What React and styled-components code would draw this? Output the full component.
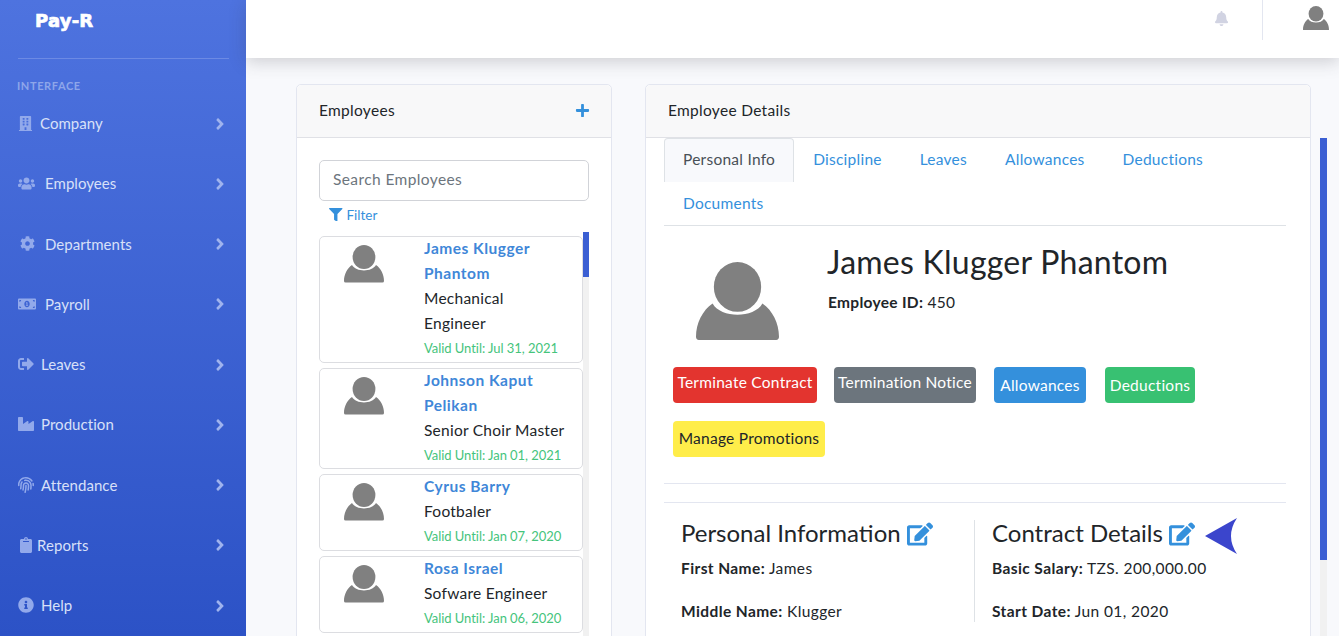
import React from "react";
import styled, { createGlobalStyle } from "styled-components";
import {
  FaBuilding, FaUsers, FaCog, FaMoneyBillAlt, FaSignOutAlt, FaIndustry,
  FaFingerprint, FaClipboard, FaInfoCircle, FaAngleRight, FaBell, FaPlus,
  FaFilter, FaEdit,
} from "react-icons/fa";

const GlobalStyle = createGlobalStyle`
  html, body { margin: 0; padding: 0; height: 636px; overflow: hidden; background: #fff; }
  body { font-family: Lato, "Open Sans", sans-serif; font-size: 16px; color: #212529; }
  * { box-sizing: border-box; }
`;

const Page = styled.div`
  display: flex;
  width: 1339px;
  height: 636px;
  overflow: hidden;
`;

const Sidebar = styled.aside`
  width: 246px;
  flex: none;
  height: 636px;
  padding: 0 17px 0 18px;
  background: linear-gradient(180deg, #4e73df 0%, #2c52c6 100%);
  color: #d4dcf6;
`;

const Brand = styled.div`
  height: 59px;
  padding: 9px 0 0 17px;
  border-bottom: 1px solid #6c8ae4;
  color: #fff;
  font-family: "DejaVu Sans", sans-serif;
  font-weight: 700;
  font-size: 18px;
  line-height: 24px;
  letter-spacing: 0.2px;
  -webkit-text-stroke: 0.7px #fff;
`;

const SectionLabel = styled.div`
  margin: 20px 0 0 -1px;
  height: 14px;
  font-size: 11px;
  line-height: 14px;
  font-weight: 700;
  letter-spacing: 0.6px;
  color: #8ea6ea;
`;

const NavItem = styled.div`
  display: flex;
  align-items: center;
  height: 60.25px;
  font-size: 15px;
  letter-spacing: 0.05px;
  color: #d8e0f8;
`;

const NavIcon = styled.span`
  display: flex;
  width: ${(p) => p.$w}px;
  padding-left: ${(p) => p.$pl || 0}px;
  color: #92a9eb;
  font-size: ${(p) => p.$size || 15}px;
`;

const NavText = styled.span`
  flex: 1;
`;

const Chevron = styled(FaAngleRight)`
  color: #9fb3ee;
  font-size: 18px;
  margin-top: 1px;
`;

const Main = styled.div`
  flex: 1;
  min-width: 0;
  background: #f8f9fc;
`;

const Topbar = styled.header`
  height: 58px;
  display: flex;
  align-items: flex-start;
  justify-content: flex-end;
  background: #fff;
  box-shadow: 0 4px 16px rgba(58, 59, 69, 0.22);
`;

const BellWrap = styled.div`
  padding-top: 11px;
  margin-right: 33px;
  color: #d1d3e2;
  font-size: 15px;
  line-height: 15px;
`;

const TopDivider = styled.div`
  width: 1px;
  height: 40px;
  background: #e3e6f0;
  margin-right: 40px;
`;

const TopAvatar = styled.div`
  padding-top: 6px;
  margin-right: 10px;
  line-height: 0;
`;

const Content = styled.div`
  display: flex;
  align-items: flex-start;
  padding: 26px 0 0 50px;
`;

const Card = styled.section`
  flex: none;
  width: ${(p) => p.$w}px;
  margin-right: ${(p) => p.$mr}px;
  height: 560px;
  background: #fff;
  border: 1px solid #e3e6f0;
  border-radius: 5px;
`;

const CardHeader = styled.div`
  display: flex;
  align-items: center;
  justify-content: space-between;
  height: 53px;
  padding: 0 22px 2px;
  background: #f8f8f9;
  border-bottom: 1px solid #e0e1e6;
  border-radius: 5px 5px 0 0;
  font-size: 15.5px;
  letter-spacing: 0.3px;
  color: #212529;
`;

const AddIcon = styled(FaPlus)`
  color: #3490dc;
  font-size: 15px;
  margin-right: -1px;
`;

const EmployeesBody = styled.div`
  padding: 22px 22px 0;
`;

const Search = styled.input`
  display: block;
  width: 270px;
  height: 41px;
  padding: 0 13px 3px;
  border: 1px solid #d1d3d8;
  border-radius: 5px;
  font: 15.5px Lato, sans-serif;
  letter-spacing: 0.4px;
  &::placeholder { color: #6c757d; opacity: 1; }
`;

const FilterLink = styled.div`
  display: flex;
  align-items: center;
  gap: 4px;
  height: 31px;
  padding: 0 0 4px 10px;
  color: #3490dc;
  font-size: 13.5px;
`;

const ListArea = styled.div`
  display: flex;
  height: 404px;
  overflow: hidden;
`;

const EmployeeList = styled.div`
  width: 264px;
  flex: none;
  padding-top: 4px;
  display: flex;
  flex-direction: column;
  gap: 5px;
`;

const EmployeeRow = styled.article`
  display: flex;
  flex: none;
  border: 1px solid #dcdde1;
  border-radius: 5px;
  padding: 0 0 0 24px;
  height: ${(p) => p.$h}px;
`;

const RowAvatar = styled.div`
  width: 80px;
  flex: none;
  padding-top: 8px;
  line-height: 0;
`;

const RowText = styled.div`
  margin-top: -1px;
  font-size: 15.5px;
  line-height: 25px;
`;

const EmpName = styled.div`
  color: #3f87d8;
  font-weight: 700;
  letter-spacing: 0.5px;
`;

const EmpRole = styled.div`
  color: #212529;
  letter-spacing: 0.25px;
`;

const Valid = styled.div`
  color: #45c47c;
  font-size: 13px;
  letter-spacing: -0.05px;
`;

const Rail = styled.div`
  flex: none;
  width: ${(p) => p.$w}px;
  background: #f1f1f1;
`;

const Thumb = styled.div`
  height: ${(p) => p.$h}px;
  background: #3b5fd3;
`;

const PageRail = styled(Rail)`
  height: 498px;
  margin-top: 54px;
`;

const DetailsBody = styled.div`
  padding: 0 24px 0 18px;
`;

const Tabs = styled.div`
  display: flex;
  flex-wrap: wrap;
  border-bottom: 1px solid #dee2e6;
`;

const Tab = styled.div`
  height: 43.5px;
  padding: 0 18px 2px;
  display: flex;
  align-items: center;
  font-size: 15.5px;
  letter-spacing: 0.25px;
  color: ${(p) => (p.$active ? "#495057" : "#3490dc")};
  background: ${(p) => (p.$active ? "#f8f9fc" : "transparent")};
  border: 1px solid ${(p) => (p.$active ? "#dee2e6" : "transparent")};
  border-bottom: 0;
  border-radius: 4px 4px 0 0;
`;

const TabBreak = styled.div`
  flex-basis: 100%;
  height: 0;
`;

const Profile = styled.div`
  display: flex;
  padding: 16px 0 0 32px;
  height: 141px;
`;

const ProfileAvatar = styled.div`
  width: 131px;
  flex: none;
  padding-top: 20px;
  line-height: 0;
`;

const ProfileName = styled.h1`
  margin: 0;
  font-size: 32px;
  line-height: 40px;
  font-weight: 400;
  letter-spacing: 0.25px;
  color: #212529;
`;

const ProfileId = styled.div`
  margin-top: 9px;
  font-size: 15.5px;
  line-height: 22px;
  letter-spacing: 0.3px;
  padding-left: 1px;
`;

const Strong = styled.b`
  font-weight: 700;
`;

const Actions = styled.div`
  display: flex;
  flex-wrap: wrap;
  gap: 18px 17px;
  padding-left: 9px;
  padding-bottom: 26px;
  border-bottom: 1px solid #e3e6f0;
`;

const Action = styled.div`
  height: 36px;
  width: ${(p) => p.$w}px;
  margin-left: ${(p) => p.$ml || 0}px;
  display: flex;
  justify-content: center;
  align-items: center;
  padding-bottom: ${(p) => p.$pb}px;
  border-radius: 4px;
  font-size: 15.5px;
  letter-spacing: 0.25px;
  color: ${(p) => p.$fg || "#fff"};
  background: ${(p) => p.$bg};
`;

const InfoColumns = styled.div`
  display: flex;
  margin-top: 18px;
  border-top: 1px solid #e3e6f0;
  padding-top: 17px;
`;

const InfoCol = styled.div`
  width: ${(p) => p.$w}px;
  padding-left: ${(p) => p.$pl}px;
  border-left: ${(p) => (p.$divider ? "1px solid #dee2e6" : "0")};
`;

const InfoTitle = styled.h2`
  display: flex;
  align-items: center;
  gap: 6px;
  margin: 0;
  height: 24px;
  font-size: 24px;
  font-weight: 400;
  color: #212529;
`;

const EditIcon = styled(FaEdit)`
  color: #3490dc;
  font-size: 26px;
  margin-top: 3px;
`;

const Pointer = styled.svg`
  margin: 7px 0 0 4px;
`;

const InfoLine = styled.div`
  margin-top: ${(p) => p.$mt}px;
  font-size: 15.5px;
  line-height: 22px;
  letter-spacing: 0.4px;
`;

const Person = ({ size, color = "#808080" }) => (
  <svg width={size} height={size * 0.94} viewBox="0 0 100 94" fill={color}>
    <ellipse cx="50" cy="30" rx="28.5" ry="30" />
    <path d="M20 50 C30 68 70 68 80 50 C92 58 100 74 100 90 Q100 94 96 94 L4 94 Q0 94 0 90 C0 74 8 58 20 50 Z" />
  </svg>
);

const navItems = [
  { label: "Company", Icon: FaBuilding, w: 22, size: 15 },
  { label: "Employees", Icon: FaUsers, w: 27, size: 17 },
  { label: "Departments", Icon: FaCog, w: 27, size: 15, pl: 2 },
  { label: "Payroll", Icon: FaMoneyBillAlt, w: 27, size: 18 },
  { label: "Leaves", Icon: FaSignOutAlt, w: 23, size: 16 },
  { label: "Production", Icon: FaIndustry, w: 23, size: 16 },
  { label: "Attendance", Icon: FaFingerprint, w: 23, size: 16 },
  { label: "Reports", Icon: FaClipboard, w: 19, size: 16 },
  { label: "Help", Icon: FaInfoCircle, w: 23, size: 16 },
];

const employees = [
  { h: 127, name: ["James Klugger", "Phantom"], role: ["Mechanical", "Engineer"], valid: "Jul 31, 2021" },
  { h: 101, name: ["Johnson Kaput", "Pelikan"], role: ["Senior Choir Master"], valid: "Jan 01, 2021" },
  { h: 77, name: ["Cyrus Barry"], role: ["Footbaler"], valid: "Jan 07, 2020" },
  { h: 77, name: ["Rosa Israel"], role: ["Sofware Engineer"], valid: "Jan 06, 2020" },
];

const tabs = ["Discipline", "Leaves", "Allowances", "Deductions"];

const actions = [
  { label: "Terminate Contract", bg: "#e3342f", w: 144, pb: 7 },
  { label: "Termination Notice", bg: "#6c757d", w: 142, pb: 7 },
  { label: "Allowances", bg: "#3490dc", w: 92, pb: 1, ml: 1 },
  { label: "Deductions", bg: "#38c172", w: 90, pb: 1, ml: 2 },
  { label: "Manage Promotions", bg: "#ffed4a", fg: "#212529", w: 152, pb: 2 },
];

const App = () => (
  <Page>
    <GlobalStyle />
    <Sidebar>
      <Brand>Pay-R</Brand>
      <SectionLabel>INTERFACE</SectionLabel>
      <nav>
        {navItems.map(({ label, Icon, w, size, pl }) => (
          <NavItem key={label}>
            <NavIcon $w={w} $size={size} $pl={pl}><Icon /></NavIcon>
            <NavText>{label}</NavText>
            <Chevron />
          </NavItem>
        ))}
      </nav>
    </Sidebar>
    <Main>
      <Topbar>
        <BellWrap><FaBell /></BellWrap>
        <TopDivider />
        <TopAvatar><Person size={26} /></TopAvatar>
      </Topbar>
      <Content>
        <Card $w={316} $mr={33}>
          <CardHeader>Employees<AddIcon /></CardHeader>
          <EmployeesBody>
            <Search placeholder="Search Employees" />
            <FilterLink><FaFilter />Filter</FilterLink>
            <ListArea>
              <EmployeeList>
                {employees.map((emp) => (
                  <EmployeeRow key={emp.name[0]} $h={emp.h}>
                    <RowAvatar><Person size={40} /></RowAvatar>
                    <RowText>
                      {emp.name.map((line) => <EmpName key={line}>{line}</EmpName>)}
                      {emp.role.map((line) => <EmpRole key={line}>{line}</EmpRole>)}
                      <Valid>Valid Until: {emp.valid}</Valid>
                    </RowText>
                  </EmployeeRow>
                ))}
              </EmployeeList>
              <Rail $w={6}><Thumb $h={45} /></Rail>
            </ListArea>
          </EmployeesBody>
        </Card>
        <Card $w={666} $mr={9}>
          <CardHeader>Employee Details</CardHeader>
          <DetailsBody>
            <Tabs>
              <Tab $active>Personal Info</Tab>
              {tabs.map((t) => <Tab key={t}>{t}</Tab>)}
              <TabBreak />
              <Tab>Documents</Tab>
            </Tabs>
            <Profile>
              <ProfileAvatar><Person size={83} /></ProfileAvatar>
              <div>
                <ProfileName>James Klugger Phantom</ProfileName>
                <ProfileId><Strong>Employee ID:</Strong> 450</ProfileId>
              </div>
            </Profile>
            <Actions>
              {actions.map((a) => (
                <Action key={a.label} $bg={a.bg} $fg={a.fg} $w={a.w} $pb={a.pb} $ml={a.ml}>{a.label}</Action>
              ))}
            </Actions>
            <InfoColumns>
              <InfoCol $w={310} $pl={17}>
                <InfoTitle>Personal Information <EditIcon /></InfoTitle>
                <InfoLine $mt={13}><Strong>First Name:</Strong> James</InfoLine>
                <InfoLine $mt={21}><Strong>Middle Name:</Strong> Klugger</InfoLine>
              </InfoCol>
              <InfoCol $w={312} $pl={17} $divider>
                <InfoTitle>
                  Contract Details <EditIcon />
                  <Pointer width="33" height="36" viewBox="0 0 33 36">
                    <path d="M0 18 L32 0 Q20 18 32 36 Z" fill="#3b45cc" />
                  </Pointer>
                </InfoTitle>
                <InfoLine $mt={13}><Strong>Basic Salary:</Strong> TZS. 200,000.00</InfoLine>
                <InfoLine $mt={21}><Strong>Start Date:</Strong> Jun 01, 2020</InfoLine>
              </InfoCol>
            </InfoColumns>
          </DetailsBody>
        </Card>
        <PageRail $w={7}><Thumb $h={422} /></PageRail>
      </Content>
    </Main>
  </Page>
);

export default App;
